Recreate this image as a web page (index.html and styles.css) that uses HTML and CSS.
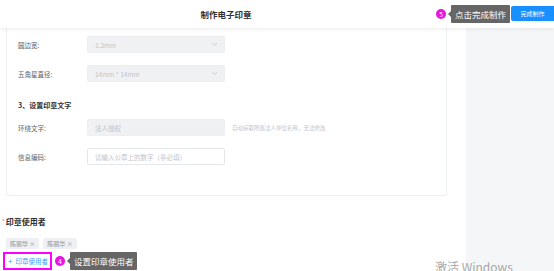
FILE: index.html
```html
<!DOCTYPE html>
<html lang="zh-CN">
<head>
  <meta charset="UTF-8">
  <title>制作电子印章</title>
  <link rel="stylesheet" href="styles.css">
</head>
<body>

<div class="page">
  <div class="header">
    <div class="title">制作电子印章</div>
    <div class="actions">
      <span class="step">5</span>
      <span class="tip">点击完成制作</span>
      <button class="btn-done">完成制作</button>
    </div>
  </div>

  <div class="main">
    <div class="content">
      <div class="card">
        <div class="row">
          <label>圆边宽:</label>
          <div class="field disabled">
            <span>1.2mm</span>
            <svg class="arrow" width="7" height="5" viewBox="0 0 7 5"><polyline points="1,1 3.5,3.5 6,1" fill="none" stroke="#c0c4cc" stroke-width="0.8"/></svg>
          </div>
        </div>
        <div class="row">
          <label>五角星直径:</label>
          <div class="field disabled">
            <span>14mm * 14mm</span>
            <svg class="arrow" width="7" height="5" viewBox="0 0 7 5"><polyline points="1,1 3.5,3.5 6,1" fill="none" stroke="#c0c4cc" stroke-width="0.8"/></svg>
          </div>
        </div>

        <div class="section-title">3、设置印章文字</div>

        <div class="row">
          <label>环绕文字:</label>
          <div class="field disabled"><span>法人授权</span></div>
          <span class="hint">自动获取所属法人单位名称，无法修改</span>
        </div>
        <div class="row">
          <label>信息编码:</label>
          <div class="field"><span>请输入公章上的数字（非必填）</span></div>
        </div>
      </div>

      <div class="users">
        <div class="users-title"><span class="req">*</span>印章使用者</div>
        <div class="tags">
          <span class="tag">陈丽华 ×</span>
          <span class="tag">陈丽华 ×</span>
        </div>
        <div class="add-row">
          <span class="add-link"><span class="plus">+</span>印章使用者</span>
          <span class="step">4</span>
          <span class="tip">设置印章使用者</span>
        </div>
      </div>
    </div>
    <div class="gap"></div>
    <div class="side"></div>
  </div>

  <div class="watermark">激活 Windows</div>
</div>

</body>
</html>
```

FILE: styles.css
```css
body {
  margin: 0;
  font-family: "Noto Sans CJK SC", "Noto Sans", sans-serif;
  background: #fff;
}

.page {
  position: relative;
  width: 554px;
  height: 271px;
  overflow: hidden;
}

.header {
  display: grid;
  height: 28px;
  align-items: center;
  background: #fff;
  box-shadow: 0 1px 4px rgba(0,0,0,0.08);
  position: relative;
  z-index: 2;
}

.title {
  grid-area: 1 / 1;
  text-align: center;
  padding-right: 102px;
  font-size: 8.5px;
  font-weight: bold;
  color: #303133;
}

.actions {
  grid-area: 1 / 1;
  justify-self: end;
  display: flex;
  align-items: center;
}

.step {
  width: 10px;
  height: 10px;
  border-radius: 50%;
  background: #e815e0;
  color: #fff;
  font-size: 6.5px;
  line-height: 10px;
  text-align: center;
}

.tip {
  position: relative;
  margin-left: 5px;
  height: 18px;
  line-height: 18px;
  padding: 0 4px;
  background: #666;
  color: #fff;
  font-size: 8.5px;
  border-radius: 1px;
}

.tip::before {
  content: "";
  position: absolute;
  left: -3px;
  top: 6px;
  border-top: 3px solid transparent;
  border-bottom: 3px solid transparent;
  border-right: 3px solid #666;
}

.btn-done {
  margin-left: 1px;
  margin-top: -2px;
  width: 43px;
  height: 15px;
  padding: 0;
  border: none;
  border-radius: 2px 0 0 2px;
  background: #1890ff;
  color: #fff;
  font-family: inherit;
  font-size: 6px;
}

.main {
  display: flex;
  height: 243px;
}

.content {
  width: 447px;
}

.gap {
  width: 19px;
}

.side {
  flex: 1;
  background: #f5f6f7;
}

.card {
  margin-left: 6px;
  padding: 8px 0 30px 11px;
  border: 1px solid #ebeef5;
  border-top: none;
  border-radius: 0 0 3px 3px;
}

.row {
  display: flex;
  align-items: center;
  height: 17px;
  margin-bottom: 12px;
}

.row:last-child {
  margin-bottom: 0;
}

.row label {
  width: 69px;
  font-size: 6.5px;
  color: #606266;
}

.field {
  display: flex;
  align-items: center;
  justify-content: space-between;
  box-sizing: border-box;
  width: 138px;
  height: 17px;
  padding: 0 6px 0 7px;
  border: 1px solid #e4e7ed;
  border-radius: 2px;
  font-size: 6.5px;
  color: #c0c4cc;
}

.field.disabled {
  background: #f0f1f3;
  border-color: #eceef1;
}

.hint {
  margin-left: 7px;
  font-size: 5.5px;
  color: #c0c4cc;
}

.section-title {
  margin: 18px 0 9px;
  height: 10px;
  line-height: 10px;
  font-size: 7px;
  font-weight: bold;
  color: #303133;
}

.users {
  padding-left: 2px;
  margin-top: 21px;
}

.users-title {
  height: 10px;
  line-height: 10px;
  font-size: 8px;
  font-weight: bold;
  color: #303133;
}

.req {
  color: #f56c6c;
  font-weight: normal;
  font-size: 6px;
  margin-right: 1px;
  vertical-align: top;
}

.tags {
  display: flex;
  gap: 4px;
  margin: 11px 0 0 4px;
}

.tag {
  height: 11px;
  line-height: 11px;
  padding: 0 4px;
  background: #eef0f3;
  border-radius: 2px;
  font-size: 6px;
  color: #8c9096;
}

.add-row {
  display: flex;
  align-items: center;
  margin-top: 3px;
}

.add-link {
  box-sizing: border-box;
  margin-left: 1px;
  height: 18px;
  line-height: 14px;
  padding: 0 2px 0 3px;
  border: 2px solid #f0f;
  font-size: 6.5px;
  color: #409eff;
}

.plus {
  font-size: 8px;
  margin-right: 3px;
}

.add-row .step {
  margin-left: 3px;
}

.add-row .tip {
  margin-left: 5px;
  padding: 0 4px;
}

.watermark {
  position: absolute;
  left: 435px;
  top: 258px;
  font-size: 12px;
  color: rgba(130,130,130,0.7);
  font-family: "Noto Sans CJK SC", "Noto Sans", sans-serif;
  white-space: nowrap;
}
```
